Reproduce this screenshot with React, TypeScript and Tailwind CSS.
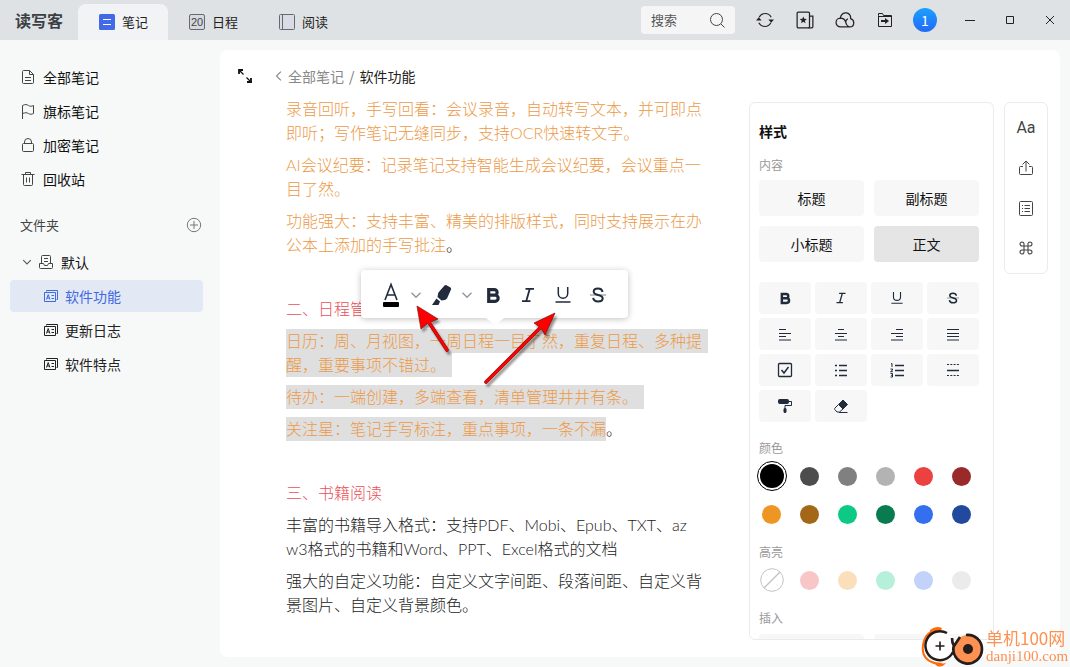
import { useState } from 'react';
import type { ReactNode } from 'react';
import clsx from 'clsx';

type IconProps = { children: ReactNode; size?: number; className?: string; stroke?: number };

function Icon({ children, size = 16, className, stroke = 1 }: IconProps) {
  return (
    <svg
      width={size}
      height={size}
      viewBox="0 0 16 16"
      fill="none"
      stroke="currentColor"
      strokeWidth={stroke}
      className={clsx('shrink-0', className)}
      aria-hidden="true"
    >
      {children}
    </svg>
  );
}

/* ---------- icons ---------- */

const DocIcon = () => (
  <Icon>
    <path d="M2.5 2.5a1 1 0 0 1 1-1h6l4 4v8a1 1 0 0 1-1 1h-9a1 1 0 0 1-1-1zM9.5 1.5v4h4M5 8.5h6M5 11.5h6" />
  </Icon>
);
const FlagIcon = () => (
  <Icon>
    <path d="M2.5 16V2.5c3-1.5 4.500-1 6 0s3 1 5 0v8c-2 1-3.500 1-5 0s-3-1-6 0" />
  </Icon>
);
const LockIcon = () => (
  <Icon>
    <rect x="2.5" y="6.5" width="11" height="8" rx="1" />
    <path d="M4.5 6.5V5a3.500 3.500 0 0 1 7 0v1.500" />
  </Icon>
);
const TrashIcon = () => (
  <Icon>
    <path d="M1.500 3.500h13M5.500 3.500v-2h5v2M3.500 3.500v10a1 1 0 0 0 1 1h7a1 1 0 0 0 1-1v-10M6.500 6.500v5M9.500 6.500v5" />
  </Icon>
);
const InboxIcon = () => (
  <Icon className="text-[#444]">
    <path d="M3.500 9V2.500a1 1 0 0 1 1-1h7a1 1 0 0 1 1 1V9M6 4.500h4M6 7.500h4M1.500 9.500h4l1 2h3l1-2h4v4a1 1 0 0 1-1 1h-11a1 1 0 0 1-1-1z" />
  </Icon>
);
const NoteIcon = () => (
  <Icon>
    <path d="M3.500 3.500v-1h11v9h-1M1.500 4.500h11v9h-11z" />
    <path d="M3.500 11.500l1.700-5 1.700 5M4 10h2.400M8.500 7.500h2.500M8.500 10.500h2.500" />
  </Icon>
);

const BoldIcon = ({ size = 14 }: { size?: number }) => (
  <Icon size={size} stroke={3}>
    <path d="M3.500 2.500h5.300a2.500 2.500 0 0 1 0 5.200H3.500zM3.500 7.700h6a2.900 2.900 0 0 1 0 5.800h-6z" />
  </Icon>
);
const ItalicIcon = ({ size = 14 }: { size?: number }) => (
  <Icon size={size} stroke={1.8}>
    <path d="M5.500 1.800h8.500M2 14.200h8.500M9.800 1.800l-3.600 12.400" />
  </Icon>
);
const UnderlineIcon = ({ size = 14 }: { size?: number }) => (
  <Icon size={size} stroke={1.5}>
    <path d="M3.300 0v6.500a4.700 4.700 0 0 0 9.400 0V0M.5 15h15" />
  </Icon>
);
const StrikeIcon = ({ size = 14 }: { size?: number }) => (
  <Icon size={size} stroke={2}>
    <path d="M12.500 5C12.200 2.800 10.700 1.600 8 1.600 5.300 1.600 3.700 2.900 3.700 4.700c0 4.300 9 2.100 9 6.500 0 2-1.900 3.200-4.600 3.200-2.900 0-4.600-1.300-4.900-3.600" />
    <path d="M0 8h16" strokeWidth="1" className="opacity-60" />
  </Icon>
);
const ChevronDown = ({ size = 12, className }: { size?: number; className?: string }) => (
  <Icon size={size} stroke={1.8} className={className}>
    <path d="M2 5l6 6 6-6" />
  </Icon>
);

const formats = [
  { name: '粗体', icon: <BoldIcon size={13} /> },
  { name: '斜体', icon: <ItalicIcon size={12} /> },
  { name: '下划线', icon: <UnderlineIcon size={12} /> },
  { name: '删除线', icon: <StrikeIcon size={12} /> },
  { name: '左对齐', icon: <Icon size={16}><path d="M2 3.500h7M2 7.500h12M2 10.500h7M2 14h12" /></Icon> },
  { name: '居中', icon: <Icon size={16}><path d="M5 3.500h6M2 7.500h12M5 10.500h6M2 14h12" /></Icon> },
  { name: '右对齐', icon: <Icon size={16}><path d="M7 3.500h7M2 7.500h12M7 10.500h7M2 14h12" /></Icon> },
  { name: '两端对齐', icon: <Icon size={16}><path d="M2 3.500h12M2 7.500h12M2 10.500h12M2 14h12" /></Icon> },
  {
    name: '待办',
    icon: (
      <Icon size={16}>
        <rect x="1.500" y="1.500" width="13" height="13" rx="1" strokeWidth="1.300" />
        <path d="M4.500 8l2.500 3 4.500-6" strokeWidth="1.500" />
      </Icon>
    ),
  },
  {
    name: '无序列表',
    icon: <Icon size={16} stroke={1.300}><path d="M2 3.500h2M6 3.500h8M2 8.500h2M6 8.500h8M2 13.500h2M6 13.500h8" /></Icon>,
  },
  {
    name: '有序列表',
    icon: (
      <Icon size={16}>
        <path d="M6 3.500h9M6 8.500h9M6 13.500h9" strokeWidth="1.300" />
        <path d="M2 2l1-.5V5M1.500 7h2v1.200l-2 1.500h2.300M1.500 11.500h2v3.500h-2M2 13.300h1.500" />
      </Icon>
    ),
  },
  {
    name: '分割线',
    icon: (
      <Icon size={16}>
        <path d="M2 2.500h12M2 13.500h12" strokeDasharray="2 1.300" />
        <path d="M2 8.500h12" strokeWidth="1.500" />
      </Icon>
    ),
  },
  {
    name: '格式刷',
    icon: (
      <Icon size={16}>
        <rect x="1.500" y="1.500" width="10" height="4" rx="1" fill="currentColor" />
        <path d="M12 3.500h2.500v4H8v3" />
        <rect x="7" y="10.500" width="2" height="4" rx=".5" fill="currentColor" />
      </Icon>
    ),
  },
  {
    name: '清除格式',
    icon: (
      <Icon size={16}>
        <path d="M5.500 6.500L10 2l4.500 4.500L10 11z" fill="currentColor" />
        <path d="M5.500 6.500L2 10c-.6.600-.6 1.200 0 1.800L4 14h2.500L10 11M6 14.500h8.500" />
      </Icon>
    ),
  },
];

const colors = [
  ['#000000', '#4d4d4d', '#808080', '#b3b3b3', '#eb4141', '#9a2a2a'],
  ['#ee9624', '#a36717', '#0cc985', '#087c4f', '#336fee', '#214a9e'],
];
const highlights = ['#f9c6c7', '#fbdfba', '#b6efda', '#c2d2fb', '#ebebeb'];

/* ---------- top bar ---------- */

const tabs = [
  {
    label: '笔记',
    icon: (
      <svg width="16" height="16" viewBox="0 0 16 16" aria-hidden="true">
        <rect width="16" height="16" rx="1.500" fill="#4169e8" />
        <path d="M4 5.500h8M4 10.500h8" stroke="#fff" />
      </svg>
    ),
  },
  {
    label: '日程',
    icon: (
      <span className="flex size-4 items-center justify-center rounded-xs border border-[#666a70] bg-[#d5d9e0] font-['Liberation_Sans'] text-[11px] text-[#444]">
        20
      </span>
    ),
  },
  {
    label: '阅读',
    icon: (
      <Icon className="text-[#666a70]">
        <rect x=".5" y=".5" width="15" height="15" rx="1" fill="#d9dce4" />
        <path d="M3.500 1v14" />
      </Icon>
    ),
  },
];

const topActions = [
  {
    name: '同步',
    icon: (
      <Icon size={18}>
        <path d="M2.800 5.500a6 6 0 0 1 10.700 0M13.200 10.500a6 6 0 0 1-10.700 0" />
        <path d="M0 8.500L2.500 5.500 5 8.500zM11 7.500h5l-2.500 3z" fill="currentColor" stroke="none" />
      </Icon>
    ),
  },
  {
    name: '收藏',
    icon: (
      <Icon size={18} stroke={1.100}>
        <rect x="1" y="1" width="11" height="14" rx="1" />
        <path d="M12 4.500h3v9.500a1 1 0 0 1-1 1h-3" />
        <path d="M6.500 4.800l.9 2.100 2.300.2-1.800 1.500.6 2.200-2-1.200-2 1.200.6-2.200-1.800-1.500 2.300-.2z" fill="currentColor" stroke="none" />
      </Icon>
    ),
  },
  {
    name: '云端',
    icon: (
      <Icon size={20}>
        <path d="M4.500 13.500a3.500 3.500 0 0 1-.3-7C4.800 3.500 7 1.800 9.300 2.300c2.200.5 3.400 2.200 3.200 4.600 1.700.5 2.500 1.700 2.500 3.200 0 2-1.400 3.400-3.300 3.400zM4.200 6.500c2.600 0 3.900 1.400 4.300 3.200.3 1.600.9 3 2.700 3.800M8.500 9.700c.1-1.200.8-2.200 1.800-2.700" />
      </Icon>
    ),
  },
  {
    name: '导入',
    icon: (
      <Icon>
        <path d="M1.500 3.500v-2h4l1 2h8v11h-13zM1.500 4.500h13" />
        <path d="M4 9h5" strokeWidth="2" />
        <path d="M8 6l4 3-4 3z" fill="currentColor" stroke="none" />
      </Icon>
    ),
  },
];

function TopBar() {
  return (
    <header className="flex h-10 shrink-0 bg-[#dfe2e5]">
      <div className="flex w-[78px] items-center justify-center text-base font-bold text-[#3c3f44]">读写客</div>
      <nav className="flex pt-1">
        {tabs.map((tab, i) => (
          <button
            key={tab.label}
            className={clsx(
              'flex w-[90px] items-center gap-[7px] rounded-t-lg pl-[21px] text-[13px] text-[#222]',
              i === 0 && 'bg-[#f2f3f5]',
            )}
          >
            {tab.icon}
            {tab.label}
          </button>
        ))}
      </nav>
      <div className="ml-auto flex items-center text-[#222]">
        <label className="mr-2.5 flex h-7 w-[94px] items-center rounded-sm bg-[#f5f5f5] px-2.5">
          <input
            aria-label="搜索"
            placeholder="搜索"
            className="w-full min-w-0 bg-transparent text-[13px] outline-none placeholder:text-[#555]"
          />
          <Icon className="text-[#444]">
            <circle cx="7.500" cy="7.500" r="6" />
            <path d="M12 12l3.500 3.500" />
          </Icon>
        </label>
        {topActions.map((a) => (
          <button key={a.name} aria-label={a.name} className="flex h-10 w-10 items-center justify-center">
            {a.icon}
          </button>
        ))}
        <button className="mr-[13px] ml-2 size-6 rounded-full bg-linear-to-b from-[#1da0ff] to-[#2468f5] text-sm leading-6 text-white">
          1
        </button>
        <button aria-label="最小化" className="flex h-10 w-10 items-center justify-center">
          <Icon size={16}><path d="M3 8.500h10" /></Icon>
        </button>
        <button aria-label="最大化" className="flex h-10 w-10 items-center justify-center">
          <Icon size={16}><path d="M4.500 4.500h7v7h-7z" /></Icon>
        </button>
        <button aria-label="关闭" className="flex h-10 w-10 items-center justify-center">
          <Icon size={16}><path d="M4 4l8 8M12 4l-8 8" /></Icon>
        </button>
      </div>
    </header>
  );
}

/* ---------- sidebar ---------- */

const navItems = [
  { label: '全部笔记', icon: <DocIcon /> },
  { label: '旗标笔记', icon: <FlagIcon /> },
  { label: '加密笔记', icon: <LockIcon /> },
  { label: '回收站', icon: <TrashIcon /> },
];
const notes = ['软件功能', '更新日志', '软件特点'];

function Sidebar() {
  const [current, setCurrent] = useState('软件功能');

  return (
    <aside className="w-[220px] shrink-0 pt-5 text-sm text-[#111]">
      <nav>
        {navItems.map((item) => (
          <button key={item.label} className="flex h-[34px] w-full items-center gap-[7px] pl-5">
            <span className="text-[#444]">{item.icon}</span>
            {item.label}
          </button>
        ))}
      </nav>
      <div className="mt-[15px] flex h-7 items-center justify-between pr-[18px] pl-5">
        <h2 className="text-[13px] text-[#444]">文件夹</h2>
        <button aria-label="新建文件夹" className="text-[#777]">
          <Icon>
            <circle cx="8" cy="8" r="6.700" />
            <path d="M8 4v8M4 8h8" />
          </Icon>
        </button>
      </div>
      <button className="mt-1.5 mb-px flex h-[34px] w-full items-center pl-[22px]">
        <ChevronDown size={10} className="mr-1.5 text-[#555]" />
        <InboxIcon />
        <span className="ml-[7px]">默认</span>
      </button>
      <ul className="space-y-0.5 pr-[17px] pl-2.5">
        {notes.map((note) => (
          <li key={note}>
            <button
              onClick={() => setCurrent(note)}
              className={clsx(
                'flex h-8 w-full items-center gap-[6px] rounded-sm pl-[33px]',
                note === current ? 'bg-[#e3e8f5] text-[#4169e1]' : 'text-[#222]',
              )}
            >
              <NoteIcon />
              {note}
            </button>
          </li>
        ))}
      </ul>
    </aside>
  );
}

/* ---------- note body ---------- */

function Line({ children, selected, full }: { children: ReactNode; selected?: boolean; full?: boolean }) {
  return (
    <span className="block whitespace-nowrap">
      <span className={clsx('inline-block h-6 align-top', selected && 'bg-[#dfdfdf]', full && 'pr-1.5')}>{children}</span>
    </span>
  );
}

function NoteBody() {
  return (
    <article className="space-y-2 overflow-hidden pl-[66px] font-[Lato,'Noto_Sans_CJK_SC',sans-serif] text-base leading-6 font-light text-[#ec9a48]">
      <p>
        <Line>录音回听，手写回看：会议录音，自动转写文本，并可即点</Line>
        <Line>即听；写作笔记无缝同步，支持OCR快速转文字。</Line>
      </p>
      <p>
        <Line>AI会议纪要：记录笔记支持智能生成会议纪要，会议重点一</Line>
        <Line>目了然。</Line>
      </p>
      <p>
        <Line>功能强大：支持丰富、精美的排版样式，同时支持展示在办</Line>
        <Line>公本上添加的手写批注<span className="text-[#222]">。</span></Line>
      </p>
      <p className="h-6" />
      <h3 className="text-[#ea4f57]">二、日程管理</h3>
      <p>
        <Line selected full>日历：周、月视图，一周日程一目了然，重复日程、多种提</Line>
        <Line selected full>醒，重要事项不错过。</Line>
      </p>
      <p>
        <Line selected full>待办：一端创建，多端查看，清单管理井井有条。</Line>
      </p>
      <p className="flex">
        <Line selected>关注星：笔记手写标注，重点事项，一条不漏</Line>
        <span className="text-[#222]">。</span>
      </p>
      <p className="h-6" />
      <h3 className="text-[#ea4f57]">三、书籍阅读</h3>
      <p className="text-[#222]">
        <Line>丰富的书籍导入格式：支持PDF、Mobi、Epub、TXT、az</Line>
        <Line>w3格式的书籍和Word、PPT、Excel格式的文档</Line>
      </p>
      <p className="text-[#222]">
        <Line>强大的自定义功能：自定义文字间距、段落间距、自定义背</Line>
        <Line>景图片、自定义背景颜色。</Line>
      </p>
    </article>
  );
}

function FloatingToolbar() {
  return (
    <div className="absolute top-[220px] left-[141px] flex h-12 w-[267px] items-center rounded-sm bg-white pt-0.5 pl-[18px] text-[#212b3b] shadow-[0_1px_6px_rgba(0,0,0,0.25)]">
      <button aria-label="文字颜色" className="flex w-6 justify-center">
        <svg width="18" height="26" viewBox="0 0 18 26" fill="none" aria-hidden="true">
          <path d="M3 18L9 2.500 15 18M5 13h8" stroke="currentColor" strokeWidth="1.600" />
          <rect x="1" y="20" width="16" height="5" rx="1" fill="#000" />
        </svg>
      </button>
      <button aria-label="选择文字颜色" className="ml-[7px] text-[#9095a0]"><ChevronDown /></button>
      <button aria-label="荧光笔" className="ml-[9px]">
        <svg width="22" height="22" viewBox="0 0 22 22" fill="currentColor" aria-hidden="true">
          <path d="M13.500 1.500q1-.8 2-.3l4 2.400q1 .8.500 2L16 14.500q-1 1.300-2.500 1.500l-3 .5-4-3.500.5-3q.2-1.500 1.500-2.800z" />
          <path d="M5.500 14.500L9 17.500 7.500 21H1z" />
        </svg>
      </button>
      <button aria-label="选择荧光笔颜色" className="ml-2 text-[#9095a0]"><ChevronDown /></button>
      <button aria-label="粗体" className="ml-3"><BoldIcon size={17} /></button>
      <button aria-label="斜体" className="ml-[18px]"><ItalicIcon size={16} /></button>
      <button aria-label="下划线" className="ml-[19px]"><UnderlineIcon size={16} /></button>
      <button aria-label="删除线" className="ml-[19px]"><StrikeIcon size={16} /></button>
      <svg width="18" height="7" viewBox="0 0 18 7" className="absolute top-full left-[125px]" aria-hidden="true">
        <path d="M0 0h18L9 7z" fill="#fff" />
      </svg>
    </div>
  );
}

function Arrows() {
  return (
    <svg
      width="160"
      height="90"
      viewBox="410 300 160 90"
      className="pointer-events-none absolute top-[250px] left-[190px] drop-shadow-[2px_3px_1px_rgba(0,0,0,0.4)]"
      aria-hidden="true"
    >
      <path d="M447 350L430 324M486 382L542 326" stroke="#7a1010" strokeWidth="3.600" strokeLinecap="round" />
      <path d="M417 306L421 329 428 323 438 319zM555 313L534 323 541 328 545 335z" fill="#f00" stroke="#7a1010" strokeWidth=".7" strokeLinejoin="round" />
      <path d="M447 350L429 322M486 382L543 325" stroke="#f00" strokeWidth="2.600" strokeLinecap="round" />
    </svg>
  );
}

/* ---------- right panels ---------- */

const contentStyles = ['标题', '副标题', '小标题', '正文'];

function StylePanel() {
  const [active, setActive] = useState('正文');
  const label = 'h-5 text-xs leading-5 text-[#999]';

  return (
    <section className="w-[245px] overflow-hidden rounded-md border border-[#ebebeb] pt-4 pr-[14px] pl-[9px]">
      <h2 className="h-6 text-sm leading-6 font-bold text-[#111]">样式</h2>
      <h3 className={clsx(label, 'mt-3')}>内容</h3>
      <div className="mt-[5px] grid grid-cols-2 gap-2.5 text-sm text-[#111]">
        {contentStyles.map((s) => (
          <button
            key={s}
            onClick={() => setActive(s)}
            className={clsx('h-9 rounded-sm', s === active ? 'bg-[#e5e5e5]' : 'bg-[#f7f7f7]')}
          >
            {s}
          </button>
        ))}
      </div>
      <div className="mt-5 grid grid-cols-4 gap-1 text-[#212b3b]">
        {formats.map((f) => (
          <button key={f.name} aria-label={f.name} className="flex h-8 items-center justify-center rounded-sm bg-[#f7f7f7]">
            {f.icon}
          </button>
        ))}
      </div>
      <h3 className={clsx(label, 'mt-4')}>颜色</h3>
      <div className="mt-[9px] space-y-[19px] pl-[3px]">
        {colors.map((row, r) => (
          <div key={r} className="flex gap-[19px]">
            {row.map((c, i) => (
              <button key={c} aria-label={c} className="relative size-[19px] rounded-full" style={{ backgroundColor: c }}>
                {r === 0 && i === 0 && (
                  <span className="absolute -top-[3px] -left-[2px] size-6 rounded-full bg-black outline-1 outline-offset-2 outline-black" />
                )}
              </button>
            ))}
          </div>
        ))}
      </div>
      <h3 className={clsx(label, 'mt-[18px]')}>高亮</h3>
      <div className="mt-[9px] flex gap-[19px] pl-[3px]">
        <button aria-label="无高亮" className="relative size-[19px]">
          <svg viewBox="0 0 24 24" className="absolute -top-[3px] -left-[2px] size-6" fill="none" stroke="#c4c4c4" aria-hidden="true">
            <circle cx="12" cy="12" r="11.300" />
            <path d="M4 20L20 4" strokeWidth="1.500" />
          </svg>
        </button>
        {highlights.map((c) => (
          <button key={c} aria-label={c} className="size-[19px] rounded-full" style={{ backgroundColor: c }} />
        ))}
      </div>
      <h3 className={clsx(label, 'mt-[18px]')}>插入</h3>
      <div className="mt-1.5 grid grid-cols-2 gap-2.5">
        <button aria-label="图片" className="h-9 rounded-sm bg-[#f7f7f7]" />
        <button aria-label="表格" className="h-9 rounded-sm bg-[#f7f7f7]" />
      </div>
    </section>
  );
}

function ToolStrip() {
  const btn = 'flex h-10 w-full items-center justify-center';
  return (
    <div className="w-11 self-start rounded-md border border-[#ebebeb] py-[5px] text-[#444]">
      <button className={clsx(btn, 'font-[Roboto,sans-serif] text-base')}>Aa</button>
      <button aria-label="分享" className={btn}>
        <Icon><path d="M5 6.500H2.500a1 1 0 0 0-1 1v6a1 1 0 0 0 1 1h11a1 1 0 0 0 1-1v-6a1 1 0 0 0-1-1H11M8 11.500V1.500M4.500 4.500L8 1l3.500 3.500" /></Icon>
      </button>
      <button aria-label="大纲" className={btn}>
        <Icon>
          <rect x="1.500" y="1.500" width="13" height="14" rx="1" />
          <path d="M4 5.500h1M6.500 5.500H12M4 8.500h1M6.500 8.500H12M4 11.500h1M6.500 11.500H12" />
        </Icon>
      </button>
      <button aria-label="快捷键" className={btn}>
        <Icon stroke={1.100}>
          <path d="M6 6h4v4H6zM6 6H4.200A2 2 0 1 1 6 4.200zM10 6V4.200A2 2 0 1 1 11.800 6zM10 10h1.800A2 2 0 1 1 10 11.800zM6 10v1.800A2 2 0 1 1 4.200 10z" />
        </Icon>
      </button>
    </div>
  );
}

function Watermark() {
  return (
    <div className="pointer-events-none fixed right-0 bottom-0 flex items-center text-[#fd9152]">
      <svg width="66" height="42" viewBox="0 0 66 42" fill="none" aria-hidden="true">
        <path d="M20 4Q5 6 3 20T14 38l8 1" stroke="#ff6b0a" strokeWidth="2" />
        <path d="M10 5q6-5 12-2l-1 3q-6-1-11 2zM12 36q6 4 14 2-4 5-9 3z" fill="#ff6b0a" />
        <circle cx="20" cy="21" r="14" fill="#fff" />
        <path d="M27 8A14.500 14.500 0 1 0 33 27" stroke="#251c1b" strokeWidth="2.500" />
        <path d="M20 16.500v9M15.500 21h9" stroke="#251c1b" strokeWidth="1.600" />
        <circle cx="48" cy="24" r="14" fill="#fd9152" />
        <path d="M46 10A14.300 14.300 0 1 1 34 20M32 13q0 5 2 8l6-9" stroke="#251c1b" strokeWidth="2.700" />
        <circle cx="48" cy="24" r="5" fill="#251c1b" />
      </svg>
      <div className="w-[84px]">
        <div className="text-[17px] leading-5">单机100网</div>
        <div className="font-['Liberation_Serif',serif] text-[15px] leading-4">danji100.com</div>
      </div>
    </div>
  );
}

export default function App() {
  return (
    <div className="flex h-screen flex-col overflow-hidden bg-[#f7f9f9] font-['Noto_Sans_CJK_SC',sans-serif]">
      <TopBar />
      <div className="flex min-h-0 flex-1">
        <Sidebar />
        <main className="relative mt-2.5 mr-2.5 mb-2.5 flex min-w-0 flex-1 rounded-lg bg-white">
          <div className="flex min-w-0 flex-1 flex-col">
            <div className="flex h-[47px] shrink-0 items-center pt-1 pl-[17px] text-sm">
              <button aria-label="全屏" className="mr-[21px] text-[#111]">
                <Icon>
                  <path d="M2 2l4.500 4.500M9.500 9.500l5 5" strokeWidth="1.300" />
                  <path d="M2 6V2h4M14 10v4h-4" strokeWidth="1.800" />
                </Icon>
              </button>
              <a href="#all" className="flex items-center text-[#888]">
                <Icon size={10} stroke={1.8} className="mr-1"><path d="M11 1L4 8l7 7" /></Icon>
                全部笔记
              </a>
              <span className="mx-[5px] text-[#777]">/</span>
              <span className="text-[#222]">软件功能</span>
            </div>
            <NoteBody />
          </div>
          <aside className="flex shrink-0 gap-2.5 pt-[52px] pr-3 pb-[17px]">
            <StylePanel />
            <ToolStrip />
          </aside>
          <FloatingToolbar />
          <Arrows />
        </main>
      </div>
      <Watermark />
    </div>
  );
}
